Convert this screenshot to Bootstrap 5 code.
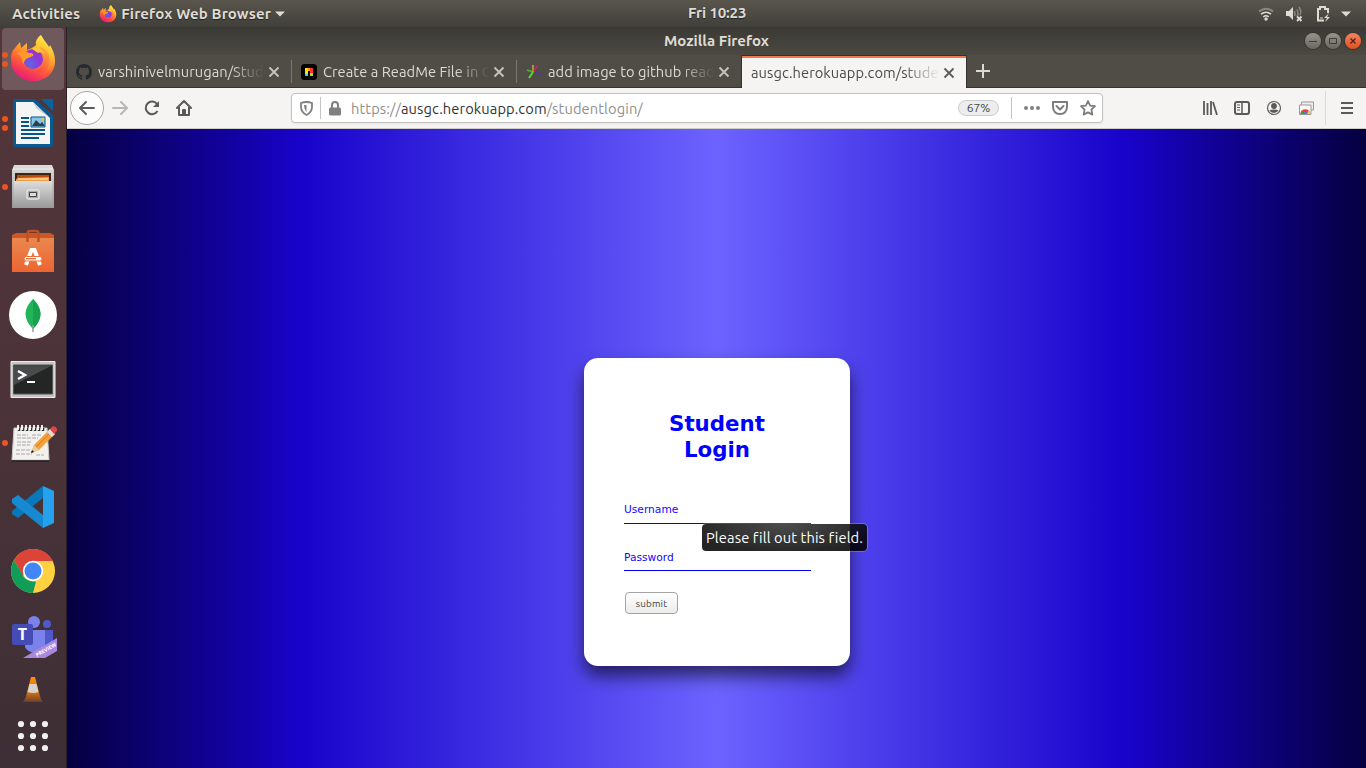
<!DOCTYPE html>
<html lang="en">
<head>
<meta charset="utf-8">
<title>Mozilla Firefox</title>
<meta name="viewport" content="width=device-width, initial-scale=1">
<link href="https://cdn.jsdelivr.net/npm/bootstrap@5.3.0/dist/css/bootstrap.min.css" rel="stylesheet">
<style>
body{font-family:Ubuntu,"Noto Sans",sans-serif;font-size:14.667px;line-height:20px;height:768px;overflow:hidden;background:#3c3b37}
svg{display:block;flex:none}
.topbar{height:27px;background:linear-gradient(#5a564d,#403f3a);color:#dfdbd2;font-size:15px;font-weight:600;padding:0 14px 0 12px;text-shadow:0 1px 1px #222}
.clock{left:688px;top:3px;letter-spacing:-.15px;white-space:nowrap}
.dock{width:67px;background:linear-gradient(#543639,#4b3339 50%,#3d2f35);border-right:1px solid #2b2029}
.dock-item{height:64px;padding-left:9px}
.dock-item.active::before{content:"";position:absolute;left:2px;top:1px;width:62px;height:62px;border-radius:4px;background:#70595d}
.dock-item svg{position:relative}
.dots{position:absolute;left:2px;width:6px;display:grid;gap:3px}
.dots i{width:6px;height:6px;border-radius:50%;background:#e95420}
.titlebar{height:28px;background:linear-gradient(#3a3935,#4c4942);color:#dfdbd2;font-size:15px;font-weight:700}
.wbtn{width:16px;height:16px;border-radius:50%;background:linear-gradient(#96948c,#69675f);box-shadow:0 0 0 1px #36352f}
.wbtn.quit{background:linear-gradient(#f58461,#e0501f)}
.tabs{height:33px;background:#504d46;border-bottom:1px solid #34322d;color:#dedad1}
.tabitem{width:225px;height:32px;padding:2px 12px 0 9px;position:relative}
.tabitem.sep::after{content:"";position:absolute;right:0;top:5px;height:23px;width:1px;background:#7c7971}
.tabitem.sep.beside{width:224px;padding-right:11px}
.tabitem.sep.beside::after{display:none}
.tabitem.current{width:226px;height:33px;background:#f5f4f2;border:1px solid #34322d;border-width:1px 1px 0;box-shadow:inset 0 2px #f0794d;color:#4b4a48;padding:1px 11px 0 9px}
.tabitem svg{color:#c9c5bc}
.tabitem.current svg{color:#5c5b59}
.ttl{overflow:hidden;white-space:nowrap;min-width:0;letter-spacing:.05px;-webkit-mask-image:linear-gradient(90deg,#000 calc(100% - 34px),transparent);mask-image:linear-gradient(90deg,#000 calc(100% - 34px),transparent)}
.tools{height:41px;background:#f5f4f2;border-bottom:1px solid #cfccca;color:#555}
.back{width:34px;height:34px;border:1px solid #a9a7a4;border-radius:50%;background:#fcfcfc}
.urlbar{width:812px;height:30px;margin-left:99px;border:1px solid #c3c0bd;border-radius:4px;background:#fff;color:#8f8f8f;padding:0 6px 0 8px;box-shadow:0 1px 2px #0001}
.vline{width:1px;height:22px;background:#c4c4c4}
.url{white-space:nowrap;padding-top:2px;letter-spacing:.1px}
.url b{font-weight:400;color:#333}
.zoomlvl{width:41px;height:16px;border:1px solid #cacaca;border-radius:8px;background:#ededed;color:#444;font-size:12px;line-height:14px;text-align:center}
.page{background:linear-gradient(90deg,#050040 0,#1803cb 18.2%,#6c63ff 50%,#1803cb 81.3%,#050040 100%);padding:229px 0 0 517px}
.login{width:266px;height:308px;border-radius:14px;background:#fff;box-shadow:0 10px 17px rgba(0,0,0,.6);padding:53px 39px 0 40px;font-family:"DejaVu Sans",sans-serif;color:#00f}
.login h1{font:bold 21.33px/26px "DejaVu Sans",sans-serif;margin:0 0 35px;padding-right:1px;text-align:center}
.field{display:block;width:187px;border:0;border-bottom:1px solid #00f;border-radius:0;padding:0;background:none;font:10.67px/14px "DejaVu Sans",sans-serif;color:#00f;outline:0}
.field::placeholder{color:#1008ff;opacity:1}
.send{width:53px;height:22px;margin:21px 0 0 1px;border:1px solid #a3a3a3;border-radius:4px;background:linear-gradient(#fff,#ececeb);color:#444;font-size:9.8px;line-height:21px;padding:0;font-family:Ubuntu,"Noto Sans",sans-serif;letter-spacing:.2px}
.tip{left:117px;top:165px;width:167px;height:29px;border:1px solid rgba(255,255,255,.22);border-radius:5px;background:radial-gradient(ellipse at 50% 0,rgba(57,57,57,.9),rgba(0,0,0,.86) 80%) padding-box;color:#fff;font:14.667px/27px Ubuntu,"Noto Sans",sans-serif;white-space:nowrap;padding-left:4px;letter-spacing:.11px}
</style>
</head>
<body class="d-flex flex-column">
<svg width="0" height="0" class="position-absolute">
<defs>
<linearGradient id="fo" x1=".8" y1="0" x2=".3" y2="1"><stop offset="0" stop-color="#fff44f"/><stop offset=".35" stop-color="#ffb52a"/><stop offset=".65" stop-color="#ff6334"/><stop offset="1" stop-color="#e4117c"/></linearGradient>
<radialGradient id="fp" cx=".35" cy=".75"><stop offset="0" stop-color="#5968e8"/><stop offset="1" stop-color="#9336d6"/></radialGradient>
<linearGradient id="gr" x2="0" y2="1"><stop offset="0" stop-color="#ddd"/><stop offset="1" stop-color="#999"/></linearGradient>
<linearGradient id="sw" x2="0" y2="1"><stop offset="0" stop-color="#e98b51"/><stop offset="1" stop-color="#ed6431"/></linearGradient>
<linearGradient id="cn" x2="0" y2="1"><stop offset="0" stop-color="#ff8c12"/><stop offset=".65" stop-color="#d36d15"/><stop offset="1" stop-color="#70442c"/></linearGradient>
<symbol id="firefox" viewBox="0 0 48 48">
<path d="M2 25c0-6 1-9 4-12l5-6 1 6 6-5v7c3-1 7-3 9-5-1-4 2-8 5-10 2 4 5 7 8 12l1-2c3 5 5 10 5 16 0 12-9 20-22 20S2 37 2 25Z" fill="url(#fo)"/>
<path d="M31 12c7 3 11 9 9 17-2 7-8 12-16 12 9 3 18-3 21-12-1 11-10 17-21 17C12 46 3 38 2 27c5 10 15 14 24 10 8-4 9-14 4-20Z" fill="#fb3466" opacity=".25"/>
<circle cx="24" cy="24" r="10" fill="url(#fp)"/>
<path d="M8 18c5-2 8-2 12 0 4 0 5 1 4 3l-5 2c-3 1-3 3-5 6-1-4 0-6-6-11Z" fill="#ff9a2b"/>
<path d="M23 14c6-3 11 0 13 5-3-2-5-2-7-1Z" fill="#ffc631"/>
</symbol>
<symbol id="x" viewBox="0 0 12 12"><path d="m1.500 1.500 9 9m0-9-9 9" stroke="currentColor" stroke-width="1.800"/></symbol>
</defs>
</svg>

<header class="topbar d-flex align-items-center position-relative">
<span style="letter-spacing:.15px">Activities</span>
<svg style="margin-left:19px;margin-right:4px" width="18" height="18"><use href="#firefox"/></svg>
<span style="letter-spacing:.13px">Firefox Web Browser</span>
<svg width="12" height="8" style="margin-left:3px"><path d="M1 1.500h10L6 6.500Z" fill="#dfdbd2"/></svg>
<span class="clock position-absolute">Fri 10:23</span>
<div class="ms-auto d-flex align-items-center">
<svg width="16" height="16" fill="none" stroke="#dfdbd2"><path d="M1 5.500Q8 0 15 5.500" stroke="#8b8881" stroke-width="2"/><path d="M3 8.200q5-4 10 0M5.300 10.800q2.700-2 5.400 0" stroke-width="1.600"/><circle cx="8" cy="13" r="1.700" fill="#dfdbd2" stroke="none"/></svg>
<svg style="margin-left:12px" width="18" height="16"><path d="M0 5h3l4-4v13L3 10H0Z" fill="#dfdbd2"/><path d="M8.500 5q1 3 0 5M11 3.500q2 4 0 7M13 1q3 5 1 8" stroke="#8b8881" stroke-width="1.500" fill="none"/><path d="m11 10.500 4.500 4.500m0-4.500L11 15" stroke="#dfdbd2" stroke-width="1.800"/></svg>
<svg style="margin-left:11px" width="16" height="18" fill="none" stroke="#dfdbd2" stroke-width="2"><path d="M9 15.500H3V4h2V2h5v2h3v4"/><path d="M5 13h3" stroke-width="1"/><path d="m14 8-5 5h3l-2 4 5-5h-3Z" fill="#dfdbd2" stroke="none"/></svg>
<svg style="margin-left:9px" width="12" height="8"><path d="M1 1.500h10L6 6.500Z" fill="#dfdbd2"/></svg>
</div>
</header>

<div class="d-flex flex-grow-1">
<nav class="dock flex-shrink-0">
<div class="dock-item active position-relative d-flex align-items-center"><div class="dots"><i></i><i></i></div><svg width="48" height="48"><use href="#firefox"/></svg></div>

<div class="dock-item position-relative d-flex align-items-center"><div class="dots"><i></i><i></i></div>
<svg width="48" height="48"><path d="M6 0h20l18 16v29a3 3 0 0 1-3 3H7a3 3 0 0 1-3-3V2a2 2 0 0 1 2-2Z" fill="#085a91"/><path d="M32 0h12v12Z" fill="#06659f"/><path d="M7 3h17l17 16v26H7Z" fill="#f4f4f4"/><path d="M24 3l17 16-14-10Z" fill="#ccc"/><path d="M12 19h8m-8 4h8m-8 4h8m-8 4h24m-24 4h24m-24 4h18" stroke="#075587" stroke-width="2"/><path d="M22 18h14v10H22Z" fill="#83c7eb" stroke="#075587"/><path d="m23 27 4-6 4 4 2-2 3 4Z" fill="#303f45"/><circle cx="34" cy="20" r="1.500" fill="#efc52f"/></svg></div>

<div class="dock-item position-relative d-flex align-items-center"><div class="dots"><i></i></div>
<svg width="48" height="48"><path d="M5 2h38l2 5v38H3V7Z" fill="url(#gr)"/><path d="M4 6h40" stroke="#eee"/><path d="M6 10h36v9H6Z" fill="#3b2419"/><path d="M8 12h32v7H8Z" fill="#bd4b0a"/><path d="m9 15 31-1v5H7v-3Z" fill="#ef9b48"/><path d="M9 16h30" stroke="#fff0b0"/><path d="M5 18h38v27H5Z" fill="url(#gr)"/><rect x="18" y="27" width="12" height="9" rx="2" fill="#aaa" stroke="#e2e2e2" stroke-width="1.500"/><path d="M20.500 29.500h7v4h-7Z" fill="#ddd" stroke="#444"/></svg></div>

<div class="dock-item position-relative d-flex align-items-center">
<svg width="48" height="48"><path d="M3 8h42v37H3Z" fill="url(#sw)"/><path d="M3 8 7 6h34l4 2v3H3Z" fill="#c95824"/><path d="M18.500 15V6.500q0-2.500 2.500-2.500h6q2.500 0 2.500 2.500V15" fill="none" stroke="#c0501f" stroke-width="2.500"/><path d="m17 38 5.500-15h3L31 38" fill="none" stroke="#fff" stroke-width="4"/><rect x="15" y="29.500" width="18" height="4.500" rx="2.200" fill="#fff" stroke="#ec7036"/><path d="M17 31.700h10" stroke="#e96834" stroke-width="1.300"/></svg></div>

<div class="dock-item position-relative d-flex align-items-center">
<svg width="48" height="48"><circle cx="24" cy="24" r="24" fill="#fff"/><path d="M24 8c10 10 10 20 0 30-10-10-10-20 0-30Z" fill="#23b45b"/><path d="M24 8c10 10 10 20 0 30Z" fill="#19a24e"/><path d="M24 34v7" stroke="#8da491" stroke-width="1.500"/></svg></div>

<div class="dock-item position-relative d-flex align-items-center">
<svg width="48" height="48"><path d="M2 6.500h44v36H2Z" fill="#c4c4c4" stroke="#eee"/><path d="M4.500 10h39v29h-39Z" fill="#242626" stroke="#555"/><path d="M5 10.500h38L5 30Z" fill="#484b4c"/><path d="m9 16 7 4L9 24" fill="none" stroke="#fff" stroke-width="2.500"/><path d="M18 27h8" stroke="#fff" stroke-width="2"/></svg></div>

<div class="dock-item position-relative d-flex align-items-center"><div class="dots"><i></i></div>
<svg width="48" height="48"><path d="M5 9h33l2 32H3Z" fill="#f2f1ed" stroke="#ccc"/><path d="M3 42h37" stroke="#222" stroke-width="1.500"/><path d="M10 9v3m4-3v3m4-3v3m4-3v3m4-3v3m4-3v3m4-3v3" stroke="#333" stroke-width="2.500"/><path d="M9 6v5m4-5v5m4-5v5m4-5v5m4-5v5m4-5v5m4-5v5" stroke="#fff" stroke-width="1.800"/><path d="M8 16h11m4 0h9M8 19h21M8 23h14m-14 3h13M7 31h14M7 35h16m4 1h8" stroke="#aaa" stroke-dasharray="4 1"/><path d="m22 34 3-8L41 10l5 5-16 16Z" fill="#f4a139"/><path d="m27 28 16-16" stroke="#d47a1c"/><path d="m25 26 5 5-8 3Z" fill="#e9cda0"/><path d="m22 34 1-3 2 2Z" fill="#111"/><path d="m38 13 3-3 5 5-3 3Z" fill="#ddd"/><path d="m41 10 3-3q5 1 4 5l-3 3Z" fill="#df4549"/></svg></div>

<div class="dock-item position-relative d-flex align-items-center">
<svg width="48" height="48"><path d="m34 3 11 5v32l-11 5Z" fill="#26a1ee"/><path d="M34 3v12L9 35l-6-4v-3Z" fill="#0878bb"/><path d="m3 16 6-4 25 20v13L3 20Z" fill="#1689d1"/></svg></div>

<div class="dock-item position-relative d-flex align-items-center">
<svg width="48" height="48"><circle cx="24" cy="24" r="22" fill="#fed141"/><path d="M24 2a22 22 0 0 1 20 12H24L14 29 5 13A22 22 0 0 1 24 2Z" fill="#db4437"/><path d="M5 13 14.500 29.500q4 5.500 12.500 5L24 46A22 22 0 0 1 5 13Z" fill="#109d58"/><circle cx="24" cy="24" r="10.200" fill="#fff"/><circle cx="24" cy="24" r="8.500" fill="#4285f4"/></svg></div>

<div class="dock-item position-relative d-flex align-items-center">
<svg width="48" height="48"><g transform="translate(0 2)"><circle cx="25" cy="9" r="6" fill="#7b83eb"/><circle cx="38" cy="11" r="4" fill="#5059c9"/><path d="M31 17h13v15q-1 6-8 7H27Z" fill="#5059c9"/><path d="M17 17h19v16q-2 9-10 7-8-1-10-6Z" fill="#7b83eb"/><rect x="3" y="11" width="21" height="21" rx="2" fill="#454cb5"/><text x="13.500" y="27" text-anchor="middle" fill="#fff" font-family="Open Sans" font-weight="700" font-size="16">T</text><path d="M14 45 48 25v13L36 45Z" fill="#aa87df"/><text transform="translate(28 44)rotate(-30)" font-family="Open Sans" font-weight="700" font-size="5.200" fill="#fff">PREVIEW</text></g></svg></div>

<div style="height:43px;padding:8px 0 0 22px"><svg width="22" height="30"><path d="m4 22-3 5h20l-3-5Z" fill="#674634"/><path d="m9 2-6 23q8 3 16 0L13 2Z" fill="url(#cn)"/><path d="M7.500 9h7l2 8q-5 2-11 0Z" fill="#d7d2cc"/></svg></div>
<div style="padding:10px 0 0 17px"><svg width="32" height="32" fill="#f3f1ef"><circle cx="4" cy="4" r="3.100"/><circle cx="16" cy="4" r="3.100"/><circle cx="28" cy="4" r="3.100"/><circle cx="4" cy="16" r="3.100"/><circle cx="16" cy="16" r="3.100"/><circle cx="28" cy="16" r="3.100"/><circle cx="4" cy="28" r="3.100"/><circle cx="16" cy="28" r="3.100"/><circle cx="28" cy="28" r="3.100"/></svg></div>
</nav>

<main class="flex-grow-1 d-flex flex-column">
<div class="titlebar d-flex align-items-center justify-content-center position-relative">
<span>Mozilla Firefox</span>
<div class="position-absolute end-0 d-flex gap-1 me-1" style="padding-right:1px">
<span class="wbtn"><svg width="16" height="16"><path d="M4 8.500h8" stroke="#3c3b37"/></svg></span>
<span class="wbtn"><svg width="16" height="16"><path d="M4.500 5.500h7v5h-7Z" fill="none" stroke="#3c3b37"/></svg></span>
<span class="wbtn quit"><svg width="16" height="16"><path d="m5.500 5.500 5 5m0-5-5 5" stroke="#4b2118" stroke-width="1.300"/></svg></span>
</div>
</div>
<div class="tabs d-flex">
<div class="tabitem sep d-flex align-items-center">
<svg width="16" height="16" viewBox="0 0 16 16" fill="#24292e"><path d="M8 0C3.580 0 0 3.580 0 8c0 3.540 2.290 6.530 5.470 7.590.4.070.55-.17.55-.38v-1.490c-2.010.37-2.530-.49-2.690-.94-.09-.23-.48-.94-.82-1.130-.28-.15-.68-.52-.01-.53.63-.01 1.080.58 1.230.82.72 1.210 1.870.87 2.330.66.070-.52.28-.87.51-1.070-1.780-.2-3.640-.89-3.640-3.950 0-.87.31-1.590.82-2.150-.08-.2-.36-1.020.08-2.120 0 0 .67-.21 2.200.82A7.600 7.600 0 0 1 8 3.870c.68 0 1.360.09 2 .27 1.530-1.040 2.200-.82 2.200-.82.44 1.100.16 1.920.08 2.120.51.56.82 1.270.82 2.150 0 3.070-1.870 3.750-3.650 3.950.29.25.54.73.54 1.480v2.200c0 .21.15.46.55.38A8.010 8.010 0 0 0 16 8c0-4.420-3.580-8-8-8Z"/></svg>
<span class="ttl flex-grow-1 me-1" style="margin-left:6px">varshinivelmurugan/Stud</span><svg width="12" height="12"><use href="#x"/></svg></div>
<div class="tabitem sep d-flex align-items-center">
<svg width="16" height="16"><rect width="16" height="16" rx="3.500" fill="#000"/><path d="M4 12V4h3v8Z" fill="#ffdf00"/><path d="M4 10h3v2H4Z" fill="#25d6e7"/><path d="M7 4h3v3H7Z" fill="#ff9e00"/><path d="M9 4h3v5H9Z" fill="#f33"/><path d="M9 9h3v3H9Z" fill="#9ce22d"/></svg>
<span class="ttl flex-grow-1 me-1" style="margin-left:6px">Create a ReadMe File in G</span><svg width="12" height="12"><use href="#x"/></svg></div>
<div class="tabitem sep beside d-flex align-items-center">
<svg width="16" height="16" stroke-width="1.800"><path d="m7 8-6-2" stroke="#46b82a"/><path d="M7 8V1" stroke="#a9a238"/><path d="m8 7 3-5" stroke="#d11f55"/><path d="m9 7 6 4" stroke="#503b90"/><path d="m3 14 4-6" stroke="#4ee32d"/></svg>
<span class="ttl flex-grow-1 me-1" style="margin-left:6px">add image to github read</span><svg width="12" height="12"><use href="#x"/></svg></div>
<div class="tabitem current d-flex align-items-center"><span class="ttl flex-grow-1 me-1">ausgc.herokuapp.com/stude</span><svg width="12" height="12"><use href="#x"/></svg></div>
<svg class="align-self-center" style="margin-left:9px" width="14" height="14"><path d="M7 0v14M0 7h14" stroke="#dedad1" stroke-width="2"/></svg>
</div>
<div class="tools d-flex align-items-center">
<div class="back d-flex align-items-center justify-content-center" style="margin-left:3px"><svg width="16" height="16" fill="none" stroke="#5a5a5a" stroke-width="1.900" stroke-linecap="round" stroke-linejoin="round"><path d="M15 8H1m6-6L1 8l6 6"/></svg></div>
<svg style="margin-left:8px" width="16" height="16" fill="none" stroke="#b8b7b5" stroke-width="2" stroke-linecap="round" stroke-linejoin="round"><path d="M1 8h14M9 2l6 6-6 6"/></svg>
<svg style="margin-left:16px" width="16" height="16" fill="none" stroke="#5a5a5a" stroke-width="2"><path d="M13.500 11A6.300 6.300 0 1 1 13 4"/><path d="M15 1v6H9Z" fill="#5a5a5a" stroke="none"/></svg>
<svg style="margin-left:16px" width="16" height="16" fill="none" stroke="#5a5a5a" stroke-width="2" stroke-linecap="round" stroke-linejoin="round"><path d="m1 8 7-7 7 7M3 7v8h10V7"/><path d="M7 14v-4h2v4"/></svg>
<div class="urlbar d-flex align-items-center">
<svg width="13" height="15" fill="none" stroke="#808080" stroke-width="1.800"><path d="M1 2q5.500-2 11 0v4q0 5-5.500 8Q1 11 1 6Z"/><path d="M6.500 4v7Q4 8 4 4Z" fill="#808080" stroke="none"/></svg>
<div class="vline" style="margin:0 8px 0 7px"></div>
<svg width="12" height="15"><path d="M3 7V4a3 3 0 0 1 6 0v3" fill="none" stroke="#808080" stroke-width="2"/><rect y="6.500" width="12" height="8" rx="1.500" fill="#808080"/></svg>
<span class="url" style="margin-left:10px">https://<b>ausgc.herokuapp.com</b>/studentlogin/</span>
<span class="zoomlvl ms-auto">67%</span>
<div class="vline" style="margin:0 12px"></div>
<svg width="16" height="4" fill="#808080"><circle cx="2" cy="2" r="2"/><circle cx="8" cy="2" r="2"/><circle cx="14" cy="2" r="2"/></svg>
<svg style="margin-left:12px" width="16" height="14" fill="none" stroke="#7c7c7c" stroke-width="2" stroke-linecap="round" stroke-linejoin="round"><path d="M1 1h14v5q-.500 7-7 7T1 6Z"/><path d="m4.500 5 3.500 3.500L11.500 5"/></svg>
<svg style="margin-left:12px" width="16" height="16" fill="none" stroke="#7c7c7c" stroke-width="1.800" stroke-linejoin="round"><path d="m8 1 2.100 4.600 4.900.6-3.600 3.400.9 5L8 12.200l-4.300 2.400.9-5L1 6.200l4.900-.6Z"/></svg>
</div>
<div class="ms-auto d-flex align-items-center">
<svg width="16" height="14" stroke="#5a5a5a" stroke-width="1.800"><path d="M2 0v14M5.500 2v12M9 0v14M11 1l4 13"/></svg>
<svg style="margin-left:16px" width="16" height="14" fill="none" stroke="#5a5a5a" stroke-width="2"><rect x="1" y="1" width="14" height="12" rx="2"/><path d="M8 1v12" stroke-width="1.500"/><path d="M3 4h3M3 6.500h3M3 9h3" stroke-width="1"/></svg>
<svg style="margin-left:16px" width="16" height="16"><circle cx="8" cy="8" r="6.500" fill="none" stroke="#5a5a5a" stroke-width="1.200"/><circle cx="8" cy="6" r="2.900" fill="#5a5a5a"/><path d="M3.500 10.200q4.500-1.500 9 0-1.500 2.800-4.500 2.800t-4.500-2.800Z" fill="#5a5a5a"/></svg>
<svg style="margin-left:16px" width="16" height="16"><path d="M3.500 2h12v8h-12Z" fill="#eee" stroke="#999"/><path d="M1.500 5h11.500v9.500H1.500Z" fill="#fafafa" stroke="#999"/><path d="M2.500 14a4.800 4.800 0 0 1 9.600 0Z" fill="#ea4335"/><path d="M2.500 14q0-2.500 1.500-3.500L6 14Z" fill="#23a94c"/><path d="m9 14 1.500-3.500q1.600 1.200 1.600 3.500Z" fill="#fc3"/><path d="M5.200 14a2.100 2.100 0 0 1 4.200 0Z" fill="#3b82f6"/></svg>
<div style="width:1px;height:34px;background:#dbd9d7;margin:0 15px 0 11px"></div>
<svg style="margin-right:13px" width="12" height="12" stroke="#5a5a5a" stroke-width="2"><path d="M0 1h12M0 6h12M0 11h12"/></svg>
</div>
</div>
<section class="page flex-grow-1">
<form class="login position-relative">
<h1>Student<br>Login</h1>
<input class="field" style="height:26px;padding-bottom:3px" placeholder="Username" aria-label="Username">
<input class="field" style="height:26px;margin-top:21px;padding-bottom:1px" type="password" placeholder="Password" aria-label="Password">
<button class="send d-block" type="button">submit</button>
<div class="tip position-absolute">Please fill out this field.</div>
</form>
</section>
</main>
</div>
<script src="https://cdn.jsdelivr.net/npm/bootstrap@5.3.0/dist/js/bootstrap.bundle.min.js"></script>
</body>
</html>
